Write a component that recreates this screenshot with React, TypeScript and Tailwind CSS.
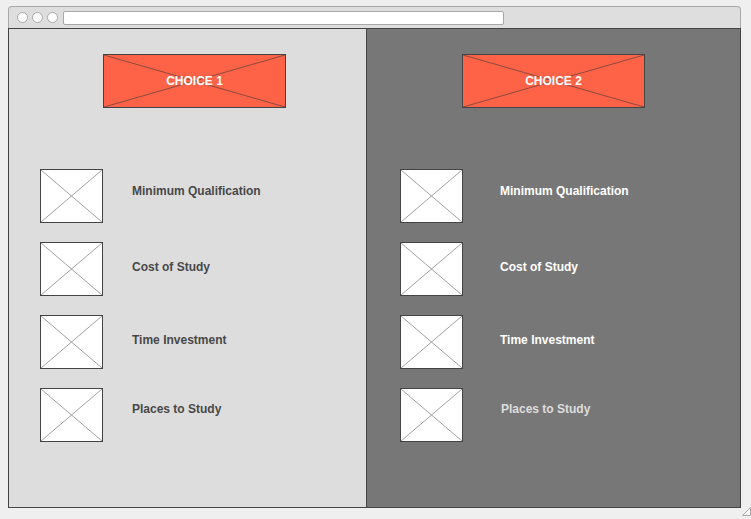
import React from "react";

function XBox({ className }: { className: string }) {
  return (
    <div className={`relative ${className}`}>
      <svg className="absolute inset-0 h-full w-full" preserveAspectRatio="none" viewBox="0 0 100 100">
        <line x1="0" y1="0" x2="100" y2="100" stroke="#a0a0a0" strokeWidth="1" vectorEffect="non-scaling-stroke" />
        <line x1="100" y1="0" x2="0" y2="100" stroke="#a0a0a0" strokeWidth="1" vectorEffect="non-scaling-stroke" />
      </svg>
    </div>
  );
}

function Choice({ label }: { label: string }) {
  return (
    <div className="relative flex h-[54px] w-[183px] items-center justify-center border border-[#444] bg-[#ff6347]">
      <svg className="absolute inset-0 h-full w-full" preserveAspectRatio="none" viewBox="0 0 100 100">
        <line x1="0" y1="0" x2="100" y2="100" stroke="#8a4a40" strokeWidth="1" vectorEffect="non-scaling-stroke" />
        <line x1="100" y1="0" x2="0" y2="100" stroke="#8a4a40" strokeWidth="1" vectorEffect="non-scaling-stroke" />
      </svg>
      <span className="relative text-[12px] font-bold text-white">{label}</span>
    </div>
  );
}

const rows = [
  { t: "Minimum Qualification", mt: "mt-[15px]" },
  { t: "Cost of Study", mt: "mt-[18px]" },
  { t: "Time Investment", mt: "mt-[18px]" },
  { t: "Places to Study", mt: "mt-[14px]" },
];

function Panel({ dark, label }: { dark: boolean; label: string }) {
  return (
    <div className={`flex flex-col ${dark ? "bg-[#777777] pl-[33px]" : "bg-[#dddddd] pl-[31px]"}`}>
      <div className={`mt-[25px] ${dark ? "ml-[62px]" : "ml-[63px]"}`}>
        <Choice label={label} />
      </div>
      <div className="mt-[61px] flex flex-col gap-[19px]">
        {rows.map((r, i) => (
          <div key={r.t} className="flex items-start">
            <XBox className="h-[54px] w-[63px] border border-[#444] bg-white" />
            <span
              className={`${r.mt} text-[12px] font-bold leading-[14px] ${
                dark ? (i === 3 ? "ml-[38px] text-[#dddddd]" : "ml-[37px] text-white") : "ml-[29px] text-[#484848]"
              }`}
            >
              {r.t}
            </span>
          </div>
        ))}
      </div>
    </div>
  );
}

export default function App() {
  return (
    <div
      className="relative h-[519px] w-[751px] overflow-hidden bg-[#efefef] pl-[8px] pt-[6px]"
      style={{ fontFamily: '"Liberation Sans", Arial, sans-serif' }}
    >
      <div className="flex w-[733px] flex-col">
        <div className="flex h-[22px] items-center rounded-t-[4px] border border-b-0 border-[#a8a8a8] bg-[#dedede] pl-[8px]">
          <div className="flex gap-[4px]">
            <div className="h-[11px] w-[11px] rounded-full border border-[#a8a8a8] bg-white" />
            <div className="h-[11px] w-[11px] rounded-full border border-[#a8a8a8] bg-white" />
            <div className="h-[11px] w-[11px] rounded-full border border-[#a8a8a8] bg-white" />
          </div>
          <div className="ml-[5px] h-[14px] w-[441px] rounded-[2px] border border-[#a8a8a8] bg-white" />
        </div>
        <div className="grid h-[480px] grid-cols-[357px_1px_1fr] border border-[#444]">
          <Panel dark={false} label="CHOICE 1" />
          <div className="bg-[#444]" />
          <Panel dark={true} label="CHOICE 2" />
        </div>
      </div>
      <svg className="absolute left-[742px] top-[507px]" width="9" height="9" viewBox="0 0 9 9">
        <path d="M8.5 0.5 V8.5 H0.5 Z" fill="#f7f7f7" stroke="#a8a8a8" strokeWidth="1" />
      </svg>
    </div>
  );
}
